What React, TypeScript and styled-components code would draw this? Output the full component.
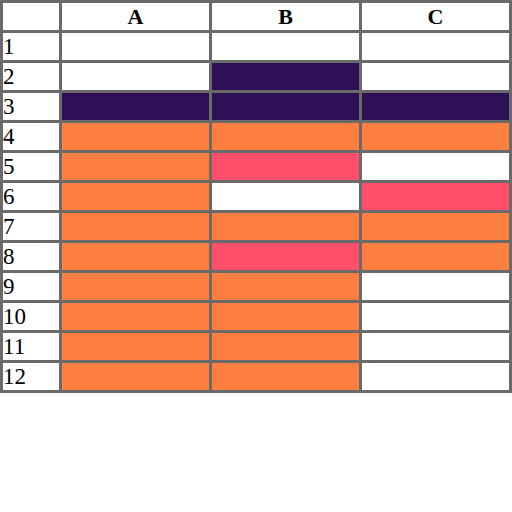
import styled, { createGlobalStyle } from 'styled-components';

const GlobalStyle = createGlobalStyle`
  body {
    margin: 0;
    background: #ffffff;
    font-family: "Liberation Serif", "Times New Roman", serif;
  }
`;

type Fill = 'w' | 'p' | 'o' | 'r';

const colors: Record<Fill, string> = {
  w: '#ffffff',
  p: '#2d1056',
  o: '#ff7f40',
  r: '#ff4f6b',
};

const rows: Fill[][] = [
  ['w', 'w', 'w'],
  ['w', 'p', 'w'],
  ['p', 'p', 'p'],
  ['o', 'o', 'o'],
  ['o', 'r', 'w'],
  ['o', 'w', 'r'],
  ['o', 'o', 'o'],
  ['o', 'r', 'o'],
  ['o', 'o', 'w'],
  ['o', 'o', 'w'],
  ['o', 'o', 'w'],
  ['o', 'o', 'w'],
];

const Sheet = styled.table`
  border-collapse: collapse;
  width: 512px;
  table-layout: fixed;
  border: 3px solid #6a6a6a;
`;

const HeadCell = styled.th<{ $w?: number }>`
  width: ${p => (p.$w ? `${p.$w}px` : 'auto')};
  height: 27px;
  padding: 0;
  border: 3px solid #6a6a6a;
  font-size: 22px;
  font-weight: bold;
  text-align: center;
  line-height: 1;
`;

const RowLabel = styled.td`
  height: 27px;
  padding: 0;
  border: 3px solid #6a6a6a;
  font-size: 23px;
  line-height: 1;
  text-align: left;
`;

const Cell = styled.td<{ $fill: Fill }>`
  height: 27px;
  padding: 0;
  border: 3px solid #6a6a6a;
  background: ${p => colors[p.$fill]};
`;

export default function App() {
  return (
    <>
      <GlobalStyle />
      <Sheet>
        <thead>
          <tr>
            <HeadCell $w={56} />
            <HeadCell>A</HeadCell>
            <HeadCell>B</HeadCell>
            <HeadCell>C</HeadCell>
          </tr>
        </thead>
        <tbody>
          {rows.map((r, i) => (
            <tr key={i}>
              <RowLabel>{i + 1}</RowLabel>
              {r.map((f, j) => (
                <Cell key={j} $fill={f} />
              ))}
            </tr>
          ))}
        </tbody>
      </Sheet>
    </>
  );
}
